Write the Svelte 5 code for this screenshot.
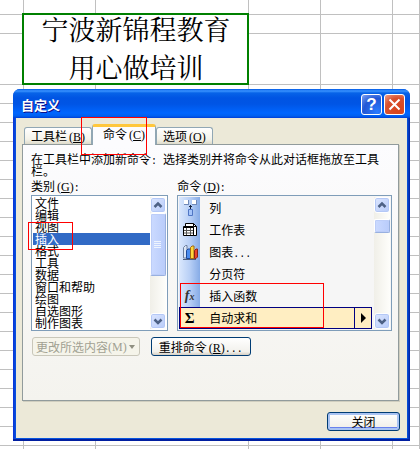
<script>
  const categories = [
    '文件', '编辑', '视图', '插入', '格式', '工具',
    '数据', '窗口和帮助', '绘图', '自选图形', '制作图表'
  ];

  const commands = [
    { name: '列', icon: 'column' },
    { name: '工作表', icon: 'sheet' },
    { name: '图表', icon: 'chart', dots: true },
    { name: '分页符', icon: '' },
    { name: '插入函数', icon: 'fx' },
    { name: '自动求和', icon: 'sum', submenu: true }
  ];

  const tabs = [
    { name: '工具栏', key: 'B' },
    { name: '命令', key: 'C' },
    { name: '选项', key: 'O' }
  ];

  const rows = Array.from({ length: 20 });

  let tab = $state('C');
  let category = $state('插入');
  let command = $state('自动求和');
</script>

{#snippet key(letter)}
  <span class="key">(<u>{letter}</u>)</span>
{/snippet}

{#snippet scrollbar(size)}
  <div class="scrollbar">
    <button class="arrow" aria-label="向上">
      <svg viewBox="0 0 14 14"><path d="M3.500 9 7 5.500 10.500 9" /></svg>
    </button>
    <div class="track">
      <div class="thumb {size}">
        {#if size === 'long'}
          <svg viewBox="0 0 8 8"><path d="M0 .5h7M0 2.500h7M0 4.500h7M0 6.500h7" /></svg>
        {/if}
      </div>
    </div>
    <button class="arrow" aria-label="向下">
      <svg viewBox="0 0 14 14"><path d="M3.500 5.500 7 9 10.500 5.500" /></svg>
    </button>
  </div>
{/snippet}

{#snippet icon(name)}
  {#if name === 'column'}
    <svg viewBox="0 0 16 16">
      <path d="M2 0h4v4H2zM10 0h4v4h-4z" fill="#fff" />
      <path d="M2 4.500h5M10 4.500h5M6.500 0v5M14.500 0v5" stroke="#7089b8" />
      <path d="M8.500 5v4M7 6.500h3" stroke="#16233f" />
      <path d="M6.500 9.500h4v6h-4z" fill="#a4c4fa" stroke="#5076c4" />
    </svg>
  {:else if name === 'sheet'}
    <svg viewBox="0 0 16 16">
      <path d="M3.500 1.500h8l3 3v9h-11z" fill="#fff" stroke="#000" />
      <path d="M11.500 1.500v3h3" fill="none" stroke="#000" />
      <path d="M1.500 4.500h10v9h-10z" fill="#fff" stroke="#000" />
      <path d="M2 5.500h9" stroke="#000" />
      <path d="M2 8.500h9M2 11h9M4.500 6v7M8.500 6v7" stroke="#555" />
    </svg>
  {:else if name === 'chart'}
    <svg viewBox="0 0 16 16">
      <path d="M1.500 14V3.500L3.500 1.500H5V14z" fill="#dbe6f6" stroke="#6d7f9d" />
      <path d="M4.500 14.500V6.500L6 5h2.500v9.500z" fill="#4a8cf0" stroke="#1d4896" />
      <path d="M8.500 14.500V3.500L10 2h2v12.500z" fill="#ffd83c" stroke="#a06a14" />
      <path d="M12.500 14.500V6.500L14 5h1.500v8l-1.500 1.500z" fill="#e8432c" stroke="#8c2213" />
      <path d="M1 15.500h13" stroke="#4c5c7c" />
    </svg>
  {:else if name === 'fx'}
    <span class="fx">f<small>x</small></span>
  {:else if name === 'sum'}
    <span class="sum">Σ</span>
  {/if}
{/snippet}

<div class="desktop">
  <table class="sheet">
    <colgroup>
      <col class="first" /><col class="cell" /><col class="wide" />
      <col class="cell" /><col class="cell" /><col />
    </colgroup>
    <tbody>
      <tr class="top"><td></td><td></td><td></td><td></td><td></td><td></td></tr>
      <tr>
        <td></td>
        <td class="merged" colspan="2" rowspan="2">
          <div>宁波新锦程教育<br />用心做培训</div>
        </td>
        <td></td><td></td><td></td>
      </tr>
      <tr class="tall"><td></td><td></td><td></td><td></td></tr>
      {#each rows as _}
        <tr><td></td><td></td><td></td><td></td><td></td><td></td></tr>
      {/each}
    </tbody>
  </table>

  <div class="dialog" role="dialog" aria-labelledby="title">
    <header>
      <h1 id="title">自定义</h1>
      <button class="caption help" aria-label="帮助">?</button>
      <button class="caption close" aria-label="关闭窗口">
        <svg viewBox="0 0 19 19"><path d="M4.500 4.500l10 10M14.500 4.500l-10 10" /></svg>
      </button>
    </header>

    <div class="body">
      <div class="tabs" role="tablist">
        {#each tabs as t}
          <button
            class="tab"
            class:active={tab === t.key}
            role="tab"
            aria-selected={tab === t.key}
            onclick={() => (tab = t.key)}
          >{t.name}{@render key(t.key)}</button>
        {/each}
        <span class="mark mark-tab"></span>
      </div>

      <div class="panel" role="tabpanel">
        <p>在工具栏中添加新命令<span class="half">:&nbsp;</span>选择类别并将命令从此对话框拖放至工具栏。</p>

        <div class="lists">
          <div class="group categories">
            <span class="label" id="cat">类别{@render key('G')}<span class="half">:</span></span>
            <div class="box">
              <div class="items" role="listbox" aria-labelledby="cat">
                {#each categories as c}
                  <button
                    class="category"
                    class:selected={category === c}
                    role="option"
                    aria-selected={category === c}
                    onclick={() => (category = c)}
                  >{c}</button>
                {/each}
              </div>
              {@render scrollbar('long')}
              <span class="mark mark-category"></span>
            </div>
          </div>

          <div class="group commands">
            <span class="label" id="cmd">命令{@render key('D')}<span class="half">:</span></span>
            <div class="box">
              <div class="items" role="listbox" aria-labelledby="cmd">
                {#each commands as c}
                  <button
                    class="command"
                    class:selected={command === c.name}
                    role="option"
                    aria-selected={command === c.name}
                    onclick={() => (command = c.name)}
                  >
                    <span class="icon">{@render icon(c.icon)}</span>
                    <span class="name">{c.name}{#if c.dots}<span class="half">...</span>{/if}</span>
                    {#if c.submenu}
                      <span class="more"><svg viewBox="0 0 6 10"><path d="M0 0v10l5-5z" /></svg></span>
                    {/if}
                  </button>
                {/each}
              </div>
              {@render scrollbar('short')}
              <span class="mark mark-command"></span>
            </div>
          </div>
        </div>

        <div class="actions">
          <button class="button modify" disabled>
            更改所选内容<span class="key">(M)</span>
            <svg viewBox="0 0 6 4"><path d="M0 0h6L3 4z" /></svg>
          </button>
          <button class="button">重排命令{@render key('R')}<span class="half">...</span></button>
        </div>
      </div>

      <footer>
        <button class="button default">关闭</button>
      </footer>
    </div>
  </div>
</div>

<style>
  :global(body) {
    margin: 0;
    background: #fff;
  }

  * {
    box-sizing: border-box;
  }

  button {
    margin: 0;
    padding: 0;
    border: 0;
    background: none;
    color: inherit;
    font: inherit;
  }

  .desktop {
    position: relative;
    height: 100vh;
    overflow: hidden;
    color: #000;
    font: 12px/12px "Noto Sans CJK SC", sans-serif;
  }

  .sheet {
    width: 100%;
    table-layout: fixed;
    border-collapse: separate;
    border-spacing: 0;
  }

  .first { width: 24px; }
  .cell { width: 72px; }
  .wide { width: 153px; }

  .sheet tr { height: 19px; }
  .sheet tr.top { height: 15px; }
  .sheet tr.tall { height: 51px; }

  .sheet td {
    padding: 0;
    border: solid #c0c0c0;
    border-width: 0 1px 1px 0;
  }

  .sheet .merged {
    position: relative;
    font-size: 27px;
    line-height: 38px;
    text-align: center;
    font-family: "Liberation Serif", "Noto Serif CJK SC", "Noto Sans CJK SC", serif;
  }

  .merged div {
    margin: -3px 0 -4px;
  }

  .merged::after {
    content: "";
    position: absolute;
    inset: -2px -1px -1px -2px;
    border: 2px solid #008000;
  }

  .dialog {
    position: absolute;
    top: 89px;
    left: 13px;
    right: 10px;
    padding: 0 3px 3px;
    background: linear-gradient(90deg, #0831d9, #0855dd 3px, #0855dd calc(100% - 3px), #001ea0);
    border-radius: 7px 7px 0 0;
    box-shadow: inset 0 -2px #001ea0;
    overflow: hidden;
  }

  header {
    display: flex;
    align-items: center;
    gap: 2px;
    height: 29px;
    margin: 0 -3px;
    padding: 2px 5px 0 8px;
    background: linear-gradient(#0058e6, #3a93ff 2px, #0763e8 4px, #0054e3 9px, #0055e5 15px, #0066ff 24px, #0060f0 27px, #003dd7);
  }

  h1 {
    flex: 1;
    margin: 0;
    color: #fff;
    font-size: 13px;
    line-height: 16px;
    font-weight: 700;
    text-shadow: 1px 1px #0f1089;
  }

  .caption {
    width: 21px;
    height: 21px;
    border: 1px solid #fff;
    border-radius: 3px;
    color: #fff;
  }

  .help {
    background: radial-gradient(circle at 80% 90%, #2a7bff, #2257d5 60%, #7fa3f3);
    font: 700 17px/19px "Liberation Sans", sans-serif;
  }

  .close {
    background: radial-gradient(circle at 70% 80%, #d8431a, #d8502e 60%, #f0a08a);
  }

  .caption svg {
    display: block;
    width: 19px;
    height: 19px;
    stroke: #fff;
    stroke-width: 2;
  }

  .body {
    padding: 6px 8px 7px 6px;
    background: #ece9d8;
  }

  .key {
    margin-left: 2px;
    font-family: "Liberation Serif", serif;
    font-size: 12px;
    line-height: 0;
  }

  .half {
    font-family: "Liberation Mono", monospace;
    font-size: 10px;
    line-height: 0;
  }

  .tabs {
    position: relative;
    display: flex;
    align-items: flex-end;
    height: 20px;
    padding-left: 2px;
  }

  .tab {
    height: 17px;
    padding: 0 6px;
    border: 1px solid #91a7b4;
    border-bottom: 0;
    border-radius: 3px 3px 0 0;
    background: linear-gradient(#fff, #f4f3ea 70%, #dedbcb);
  }

  .tab.active {
    height: 21px;
    margin-bottom: -1px;
    padding: 0 10px 4px;
    border-top: 3px solid #ffc73c;
    background: #fcfcfe;
    z-index: 1;
  }

  .panel {
    padding: 8px 6px 44px 8px;
    border: 1px solid #919b9c;
    background: linear-gradient(#fcfcfe, #f4f3ee);
    box-shadow: 1px 1px #d0cebf;
  }

  p {
    margin: 0;
    padding-right: 8px;
  }

  .lists {
    display: flex;
    gap: 9px;
    margin-top: 2px;
  }

  .group {
    display: flex;
    flex-direction: column;
    gap: 2px;
  }

  .categories { flex: 0 0 38%; }
  .commands { flex: 1; }

  .label {
    line-height: 14px;
  }

  .box {
    position: relative;
    display: flex;
    padding: 1px;
    border: 1px solid #7f9db9;
    background: #fff;
  }

  .items {
    flex: 1;
    display: flex;
    flex-direction: column;
  }

  .category {
    height: 12px;
    padding-left: 2px;
    text-align: left;
  }

  .category.selected {
    background: #316ac5;
    color: #fff;
  }

  .commands .box {
    background: #f6f6f6;
  }

  .commands .items {
    margin-right: 2px;
  }

  .command {
    display: flex;
    align-items: stretch;
    height: 22px;
    text-align: left;
    line-height: 22px;
  }

  .icon {
    display: flex;
    align-items: center;
    justify-content: center;
    width: 21px;
    background: linear-gradient(90deg, #dbe8fd, #b9d0f6 50%, #86abe6);
  }

  .icon svg {
    width: 16px;
    height: 16px;
  }

  .fx {
    color: #333;
    font: italic 700 14px/16px "Liberation Serif", serif;
  }

  .fx small {
    font-size: 10px;
  }

  .sum {
    font: 700 15px/16px "Liberation Serif", serif;
  }

  .name {
    flex: 1;
    padding-left: 9px;
  }

  .command.selected {
    background: #ffeec2;
    box-shadow: inset 0 0 0 1px #000080;
  }

  .command.selected .icon {
    background: none;
  }

  .more {
    display: flex;
    align-items: center;
    justify-content: center;
    width: 18px;
    border-left: 1px solid #000080;
  }

  .more svg {
    width: 6px;
    height: 10px;
  }

  .scrollbar {
    display: flex;
    flex-direction: column;
    width: 16px;
    background: linear-gradient(90deg, #f0efe8, #fefefb);
  }

  .arrow {
    width: 16px;
    height: 16px;
    border: 1px solid #fff;
    border-radius: 3px;
    background: linear-gradient(135deg, #dce6ff, #b7cbf9);
    box-shadow: inset 0 0 0 1px #b4c8f6;
  }

  .arrow svg {
    display: block;
    width: 14px;
    height: 14px;
    fill: none;
    stroke: #4d6185;
    stroke-width: 2.5;
  }

  .track {
    flex: 1;
  }

  .thumb {
    display: flex;
    align-items: center;
    justify-content: center;
    border: 1px solid #98b0e0;
    border-color: #fff #98b0e0 #98b0e0 #fff;
    border-radius: 2px;
    background: linear-gradient(90deg, #cbdaff, #b9ccfb);
    box-shadow: inset 0 0 0 1px #bccdf8;
  }

  .thumb.long {
    height: 63px;
  }

  .thumb.short {
    height: 14px;
    margin-top: 6px;
  }

  .thumb svg {
    width: 8px;
    height: 8px;
    stroke: #eef4fe;
  }

  .actions {
    display: flex;
    gap: 11px;
    margin-top: 6px;
    padding-left: 1px;
  }

  .button {
    height: 19px;
    padding: 0 7px;
    border: 1px solid #003c74;
    border-radius: 3px;
    background: linear-gradient(#fff, #f2f1ec 80%, #d6d0c5);
    white-space: nowrap;
  }

  .button.modify {
    display: flex;
    align-items: center;
    padding: 0 4px 0 3px;
    border-color: #c9c7ba;
    background: #f5f4ea;
    color: #a1a192;
  }

  .modify .key {
    margin-left: 0;
  }

  .modify svg {
    width: 6px;
    height: 4px;
    margin-left: 2px;
    fill: #8f8f80;
  }

  footer {
    display: flex;
    justify-content: flex-end;
    margin-top: 11px;
    margin-right: -1px;
  }

  .button.default {
    width: 73px;
    box-shadow: inset 0 0 0 2px #a9c3f2, inset 0 -1px 0 2px #6982ee;
  }

  /* red frames drawn over the controls */
  .mark {
    position: absolute;
    border: 1px solid #f00;
    pointer-events: none;
    z-index: 2;
  }

  .mark-tab {
    top: -7px;
    left: 59px;
    width: 66px;
    height: 38px;
  }

  .mark-category {
    top: 26px;
    left: -4px;
    width: 45px;
    height: 28px;
  }

  .mark-command {
    top: 87px;
    left: 2px;
    width: 144px;
    height: 45px;
  }
</style>
